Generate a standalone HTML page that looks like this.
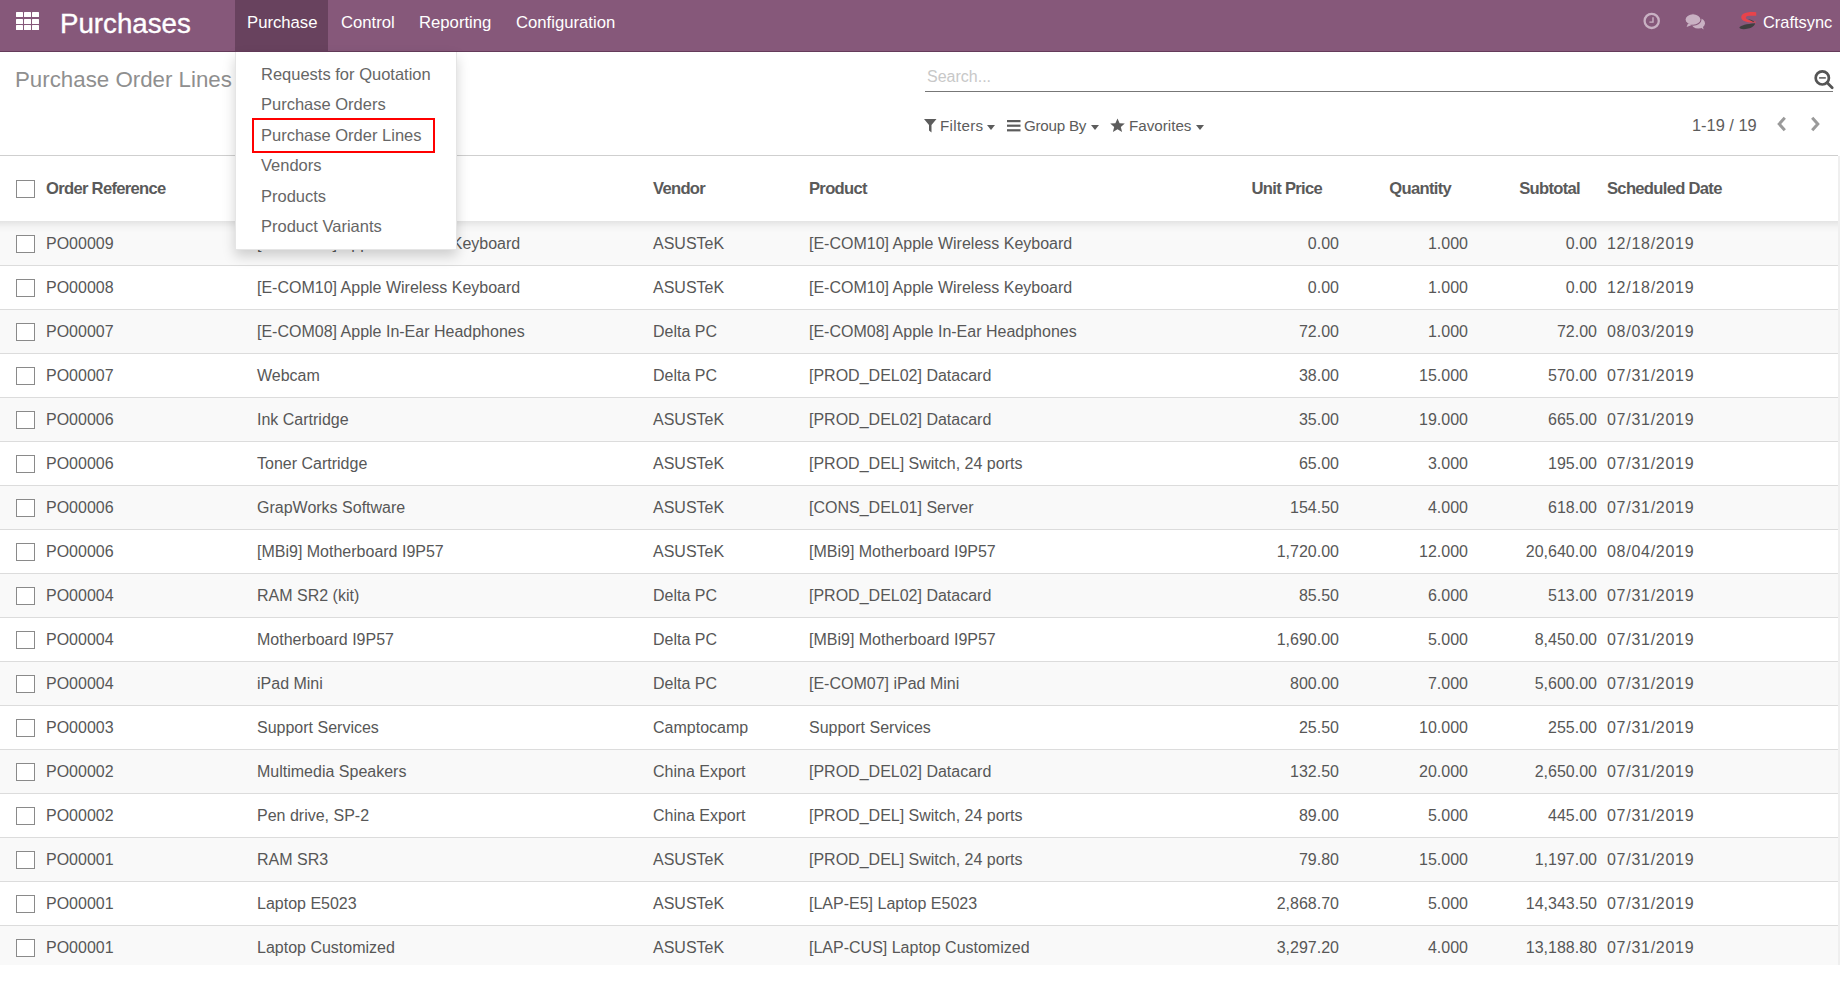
<!DOCTYPE html><html><head><meta charset="utf-8"><style>
*{box-sizing:border-box;margin:0;padding:0}
html,body{width:1840px;height:994px;overflow:hidden;background:#fff;font-family:"Liberation Sans",sans-serif;color:#575757;position:relative}
.a{position:absolute;white-space:nowrap}
.nav{position:absolute;left:0;top:0;width:1840px;height:52px;background:#86587A;border-bottom:1px solid #643b5a}
.navtxt{color:#fff;font-size:16px;line-height:20px}
.cb{position:absolute;left:16px;width:19px;height:18px;border:1px solid #8a8a8a;background:#fff}
.row{position:absolute;left:0;width:1838px;height:44px;border-top:1px solid #dcdcdc}
.odd{background:#f9f9f9}
.t{position:absolute;white-space:nowrap;font-size:16px;line-height:20px}
.r{text-align:right}
.th{position:absolute;white-space:nowrap;font-size:16.6px;line-height:20px;font-weight:bold;color:#5a5a5a;letter-spacing:-0.7px}
.dd{position:absolute;white-space:nowrap;font-size:16.5px;line-height:20px;color:#666;left:261px}
</style></head><body>
<div class="nav"></div>
<div class="a" style="left:235px;top:0;width:93px;height:51px;background:#68425E"></div>
<div class="a" style="left:16px;top:12.0px;width:7px;height:5px;background:#fff;border-radius:0.5px"></div>
<div class="a" style="left:24px;top:12.0px;width:7px;height:5px;background:#fff;border-radius:0.5px"></div>
<div class="a" style="left:32px;top:12.0px;width:7px;height:5px;background:#fff;border-radius:0.5px"></div>
<div class="a" style="left:16px;top:18.5px;width:7px;height:5px;background:#fff;border-radius:0.5px"></div>
<div class="a" style="left:24px;top:18.5px;width:7px;height:5px;background:#fff;border-radius:0.5px"></div>
<div class="a" style="left:32px;top:18.5px;width:7px;height:5px;background:#fff;border-radius:0.5px"></div>
<div class="a" style="left:16px;top:25.0px;width:7px;height:5px;background:#fff;border-radius:0.5px"></div>
<div class="a" style="left:24px;top:25.0px;width:7px;height:5px;background:#fff;border-radius:0.5px"></div>
<div class="a" style="left:32px;top:25.0px;width:7px;height:5px;background:#fff;border-radius:0.5px"></div>
<div class="a navtxt" style="left:60px;top:7px;font-size:27.7px;line-height:34px;-webkit-text-stroke:0.35px #fff">Purchases</div>
<div class="a navtxt" style="left:247px;top:13px;font-size:16.7px">Purchase</div>
<div class="a navtxt" style="left:341px;top:13px;font-size:16.7px">Control</div>
<div class="a navtxt" style="left:419px;top:13px;font-size:16.7px">Reporting</div>
<div class="a navtxt" style="left:516px;top:13px;font-size:16.7px">Configuration</div>
<svg class="a" style="left:1640px;top:9px" width="24" height="24" viewBox="0 0 24 24"><circle cx="11.7" cy="11.9" r="7.1" fill="none" stroke="#c9b1c3" stroke-width="2.3"/><path d="M13 8.2V13.1H9.4" fill="none" stroke="#c9b1c3" stroke-width="1.4"/></svg>
<svg class="a" style="left:1680px;top:8px" width="30" height="26" viewBox="0 0 30 26"><ellipse cx="18.2" cy="15.2" rx="6.8" ry="5.2" fill="#c9b1c3"/><path d="M20 19L23.6 21.4L22.5 17Z" fill="#c9b1c3"/><ellipse cx="13" cy="11.5" rx="8" ry="5.7" fill="#c9b1c3" stroke="#86587A" stroke-width="1.1"/><path d="M8 15.5L6.6 18.9L12.5 16.8Z" fill="#c9b1c3"/></svg>
<svg class="a" style="left:1734px;top:8px" width="30" height="26" viewBox="0 0 30 26"><path d="M22.2 4.3C18 3.6 12.5 4 9.3 5.8C6.6 7.4 6.5 11 9.6 12.8C12.8 14.6 18 14.8 22.1 14.5L21.6 13.5C18 13.2 14.6 12.4 12.6 11C11.2 10 11.6 8.6 13.6 8.1C16.2 7.6 19.2 7.7 22.3 7.8Z" fill="#e8434b"/><path d="M14 11.1C16.5 11.6 18.6 12.4 20.2 13.5L19.2 13.9C17.6 13.1 16 12.3 14 11.1Z" fill="#3f3f3f"/><path d="M5.3 19.6C6.8 17.2 12.5 16 21 15.2C21.2 17 18.4 19.6 14.2 20.6C10.2 21.6 6.2 21.6 5.3 19.6Z" fill="#3f3f3f"/></svg>
<div class="a navtxt" style="left:1763px;top:12px;font-size:16.4px">Craftsync</div>
<div class="a" style="left:15px;top:66px;font-size:22.3px;line-height:28px;color:#8f8f8f">Purchase Order Lines</div>
<div class="a" style="left:925px;top:91px;width:908px;height:1px;background:#777"></div>
<div class="a" style="left:927px;top:67px;font-size:16px;line-height:20px;color:#c8c8c8">Search...</div>
<svg class="a" style="left:1812px;top:68px" width="24" height="24" viewBox="0 0 24 24"><circle cx="10.3" cy="9.9" r="6.6" fill="none" stroke="#555" stroke-width="2.7"/><path d="M7.1 9.9H13.8" stroke="#555" stroke-width="1.5"/><path d="M15.2 14.8L20.2 19.8" stroke="#555" stroke-width="2.8" stroke-linecap="round"/></svg>
<svg class="a" style="left:924px;top:119px" width="13" height="14" viewBox="0 0 13 14"><path d="M0 0H12.5L7.5 6V13.5L5 11.5V6Z" fill="#5c5c5c"/></svg>
<div class="a" style="left:940px;top:116px;font-size:15.2px;letter-spacing:0.3px;line-height:20px;color:#5c5c5c">Filters</div>
<div class="a" style="left:986.5px;top:125px;width:0;height:0;border-left:4.6px solid transparent;border-right:4.6px solid transparent;border-top:5.2px solid #5c5c5c"></div>
<svg class="a" style="left:1007px;top:120px" width="14" height="12" viewBox="0 0 14 12"><rect x="0" y="0" width="13.5" height="2.2" fill="#5c5c5c"/><rect x="0" y="4.6" width="13.5" height="2.2" fill="#5c5c5c"/><rect x="0" y="9.2" width="13.5" height="2.2" fill="#5c5c5c"/></svg>
<div class="a" style="left:1024px;top:116px;font-size:15.2px;letter-spacing:-0.25px;line-height:20px;color:#5c5c5c">Group By</div>
<div class="a" style="left:1090.5px;top:125px;width:0;height:0;border-left:4.6px solid transparent;border-right:4.6px solid transparent;border-top:5.2px solid #5c5c5c"></div>
<svg class="a" style="left:1110px;top:118px" width="16" height="15" viewBox="0 0 16 15"><path d="M7.5 0.5L9.6 5.2L14.8 5.6L10.8 9L12.1 14L7.5 11.3L2.9 14L4.2 9L0.2 5.6L5.4 5.2Z" fill="#5c5c5c"/></svg>
<div class="a" style="left:1129px;top:116px;font-size:15.2px;line-height:20px;color:#5c5c5c">Favorites</div>
<div class="a" style="left:1195.5px;top:125px;width:0;height:0;border-left:4.6px solid transparent;border-right:4.6px solid transparent;border-top:5.2px solid #5c5c5c"></div>
<div class="a" style="left:1692px;top:115px;font-size:16.4px;line-height:20px;color:#5c5c5c">1-19 / 19</div>
<svg class="a" style="left:1775.5px;top:116px" width="12" height="16" viewBox="0 0 12 16"><path d="M8.8 1.8L3.2 8L8.8 14.2" fill="none" stroke="#9a9a9a" stroke-width="3"/></svg>
<svg class="a" style="left:1808.5px;top:116px" width="12" height="16" viewBox="0 0 12 16"><path d="M3.2 1.8L8.8 8L3.2 14.2" fill="none" stroke="#9a9a9a" stroke-width="3"/></svg>
<div class="a" style="left:0;top:155px;width:1838px;height:1px;background:#cfcfcf"></div>
<div class="cb" style="top:180px"></div>
<div class="th" style="left:46px;top:179px">Order Reference</div>
<div class="th" style="left:257px;top:179px">Description</div>
<div class="th" style="left:653px;top:179px">Vendor</div>
<div class="th" style="left:809px;top:179px">Product</div>
<div class="th" style="left:1607px;top:179px">Scheduled Date</div>
<div class="th r" style="right:518px;top:179px">Unit Price</div>
<div class="th r" style="right:389px;top:179px">Quantity</div>
<div class="th r" style="right:260px;top:179px">Subtotal</div>
<div class="row odd" style="top:221px;height:44px;border-top:none"></div>
<div class="cb" style="top:235px"></div>
<div class="t" style="left:46px;top:234px">PO00009</div>
<div class="t" style="left:257px;top:234px">[E-COM10] Apple Wireless Keyboard</div>
<div class="t" style="left:653px;top:234px">ASUSTeK</div>
<div class="t" style="left:809px;top:234px">[E-COM10] Apple Wireless Keyboard</div>
<div class="t" style="left:1607px;top:234px;letter-spacing:0.72px">12/18/2019</div>
<div class="t r" style="right:501px;top:234px">0.00</div>
<div class="t r" style="right:372px;top:234px">1.000</div>
<div class="t r" style="right:243px;top:234px">0.00</div>
<div class="row" style="top:265px;height:44px"></div>
<div class="cb" style="top:279px"></div>
<div class="t" style="left:46px;top:278px">PO00008</div>
<div class="t" style="left:257px;top:278px">[E-COM10] Apple Wireless Keyboard</div>
<div class="t" style="left:653px;top:278px">ASUSTeK</div>
<div class="t" style="left:809px;top:278px">[E-COM10] Apple Wireless Keyboard</div>
<div class="t" style="left:1607px;top:278px;letter-spacing:0.72px">12/18/2019</div>
<div class="t r" style="right:501px;top:278px">0.00</div>
<div class="t r" style="right:372px;top:278px">1.000</div>
<div class="t r" style="right:243px;top:278px">0.00</div>
<div class="row odd" style="top:309px;height:44px"></div>
<div class="cb" style="top:323px"></div>
<div class="t" style="left:46px;top:322px">PO00007</div>
<div class="t" style="left:257px;top:322px">[E-COM08] Apple In-Ear Headphones</div>
<div class="t" style="left:653px;top:322px">Delta PC</div>
<div class="t" style="left:809px;top:322px">[E-COM08] Apple In-Ear Headphones</div>
<div class="t" style="left:1607px;top:322px;letter-spacing:0.72px">08/03/2019</div>
<div class="t r" style="right:501px;top:322px">72.00</div>
<div class="t r" style="right:372px;top:322px">1.000</div>
<div class="t r" style="right:243px;top:322px">72.00</div>
<div class="row" style="top:353px;height:44px"></div>
<div class="cb" style="top:367px"></div>
<div class="t" style="left:46px;top:366px">PO00007</div>
<div class="t" style="left:257px;top:366px">Webcam</div>
<div class="t" style="left:653px;top:366px">Delta PC</div>
<div class="t" style="left:809px;top:366px">[PROD_DEL02] Datacard</div>
<div class="t" style="left:1607px;top:366px;letter-spacing:0.72px">07/31/2019</div>
<div class="t r" style="right:501px;top:366px">38.00</div>
<div class="t r" style="right:372px;top:366px">15.000</div>
<div class="t r" style="right:243px;top:366px">570.00</div>
<div class="row odd" style="top:397px;height:44px"></div>
<div class="cb" style="top:411px"></div>
<div class="t" style="left:46px;top:410px">PO00006</div>
<div class="t" style="left:257px;top:410px">Ink Cartridge</div>
<div class="t" style="left:653px;top:410px">ASUSTeK</div>
<div class="t" style="left:809px;top:410px">[PROD_DEL02] Datacard</div>
<div class="t" style="left:1607px;top:410px;letter-spacing:0.72px">07/31/2019</div>
<div class="t r" style="right:501px;top:410px">35.00</div>
<div class="t r" style="right:372px;top:410px">19.000</div>
<div class="t r" style="right:243px;top:410px">665.00</div>
<div class="row" style="top:441px;height:44px"></div>
<div class="cb" style="top:455px"></div>
<div class="t" style="left:46px;top:454px">PO00006</div>
<div class="t" style="left:257px;top:454px">Toner Cartridge</div>
<div class="t" style="left:653px;top:454px">ASUSTeK</div>
<div class="t" style="left:809px;top:454px">[PROD_DEL] Switch, 24 ports</div>
<div class="t" style="left:1607px;top:454px;letter-spacing:0.72px">07/31/2019</div>
<div class="t r" style="right:501px;top:454px">65.00</div>
<div class="t r" style="right:372px;top:454px">3.000</div>
<div class="t r" style="right:243px;top:454px">195.00</div>
<div class="row odd" style="top:485px;height:44px"></div>
<div class="cb" style="top:499px"></div>
<div class="t" style="left:46px;top:498px">PO00006</div>
<div class="t" style="left:257px;top:498px">GrapWorks Software</div>
<div class="t" style="left:653px;top:498px">ASUSTeK</div>
<div class="t" style="left:809px;top:498px">[CONS_DEL01] Server</div>
<div class="t" style="left:1607px;top:498px;letter-spacing:0.72px">07/31/2019</div>
<div class="t r" style="right:501px;top:498px">154.50</div>
<div class="t r" style="right:372px;top:498px">4.000</div>
<div class="t r" style="right:243px;top:498px">618.00</div>
<div class="row" style="top:529px;height:44px"></div>
<div class="cb" style="top:543px"></div>
<div class="t" style="left:46px;top:542px">PO00006</div>
<div class="t" style="left:257px;top:542px">[MBi9] Motherboard I9P57</div>
<div class="t" style="left:653px;top:542px">ASUSTeK</div>
<div class="t" style="left:809px;top:542px">[MBi9] Motherboard I9P57</div>
<div class="t" style="left:1607px;top:542px;letter-spacing:0.72px">08/04/2019</div>
<div class="t r" style="right:501px;top:542px">1,720.00</div>
<div class="t r" style="right:372px;top:542px">12.000</div>
<div class="t r" style="right:243px;top:542px">20,640.00</div>
<div class="row odd" style="top:573px;height:44px"></div>
<div class="cb" style="top:587px"></div>
<div class="t" style="left:46px;top:586px">PO00004</div>
<div class="t" style="left:257px;top:586px">RAM SR2 (kit)</div>
<div class="t" style="left:653px;top:586px">Delta PC</div>
<div class="t" style="left:809px;top:586px">[PROD_DEL02] Datacard</div>
<div class="t" style="left:1607px;top:586px;letter-spacing:0.72px">07/31/2019</div>
<div class="t r" style="right:501px;top:586px">85.50</div>
<div class="t r" style="right:372px;top:586px">6.000</div>
<div class="t r" style="right:243px;top:586px">513.00</div>
<div class="row" style="top:617px;height:44px"></div>
<div class="cb" style="top:631px"></div>
<div class="t" style="left:46px;top:630px">PO00004</div>
<div class="t" style="left:257px;top:630px">Motherboard I9P57</div>
<div class="t" style="left:653px;top:630px">Delta PC</div>
<div class="t" style="left:809px;top:630px">[MBi9] Motherboard I9P57</div>
<div class="t" style="left:1607px;top:630px;letter-spacing:0.72px">07/31/2019</div>
<div class="t r" style="right:501px;top:630px">1,690.00</div>
<div class="t r" style="right:372px;top:630px">5.000</div>
<div class="t r" style="right:243px;top:630px">8,450.00</div>
<div class="row odd" style="top:661px;height:44px"></div>
<div class="cb" style="top:675px"></div>
<div class="t" style="left:46px;top:674px">PO00004</div>
<div class="t" style="left:257px;top:674px">iPad Mini</div>
<div class="t" style="left:653px;top:674px">Delta PC</div>
<div class="t" style="left:809px;top:674px">[E-COM07] iPad Mini</div>
<div class="t" style="left:1607px;top:674px;letter-spacing:0.72px">07/31/2019</div>
<div class="t r" style="right:501px;top:674px">800.00</div>
<div class="t r" style="right:372px;top:674px">7.000</div>
<div class="t r" style="right:243px;top:674px">5,600.00</div>
<div class="row" style="top:705px;height:44px"></div>
<div class="cb" style="top:719px"></div>
<div class="t" style="left:46px;top:718px">PO00003</div>
<div class="t" style="left:257px;top:718px">Support Services</div>
<div class="t" style="left:653px;top:718px">Camptocamp</div>
<div class="t" style="left:809px;top:718px">Support Services</div>
<div class="t" style="left:1607px;top:718px;letter-spacing:0.72px">07/31/2019</div>
<div class="t r" style="right:501px;top:718px">25.50</div>
<div class="t r" style="right:372px;top:718px">10.000</div>
<div class="t r" style="right:243px;top:718px">255.00</div>
<div class="row odd" style="top:749px;height:44px"></div>
<div class="cb" style="top:763px"></div>
<div class="t" style="left:46px;top:762px">PO00002</div>
<div class="t" style="left:257px;top:762px">Multimedia Speakers</div>
<div class="t" style="left:653px;top:762px">China Export</div>
<div class="t" style="left:809px;top:762px">[PROD_DEL02] Datacard</div>
<div class="t" style="left:1607px;top:762px;letter-spacing:0.72px">07/31/2019</div>
<div class="t r" style="right:501px;top:762px">132.50</div>
<div class="t r" style="right:372px;top:762px">20.000</div>
<div class="t r" style="right:243px;top:762px">2,650.00</div>
<div class="row" style="top:793px;height:44px"></div>
<div class="cb" style="top:807px"></div>
<div class="t" style="left:46px;top:806px">PO00002</div>
<div class="t" style="left:257px;top:806px">Pen drive, SP-2</div>
<div class="t" style="left:653px;top:806px">China Export</div>
<div class="t" style="left:809px;top:806px">[PROD_DEL] Switch, 24 ports</div>
<div class="t" style="left:1607px;top:806px;letter-spacing:0.72px">07/31/2019</div>
<div class="t r" style="right:501px;top:806px">89.00</div>
<div class="t r" style="right:372px;top:806px">5.000</div>
<div class="t r" style="right:243px;top:806px">445.00</div>
<div class="row odd" style="top:837px;height:44px"></div>
<div class="cb" style="top:851px"></div>
<div class="t" style="left:46px;top:850px">PO00001</div>
<div class="t" style="left:257px;top:850px">RAM SR3</div>
<div class="t" style="left:653px;top:850px">ASUSTeK</div>
<div class="t" style="left:809px;top:850px">[PROD_DEL] Switch, 24 ports</div>
<div class="t" style="left:1607px;top:850px;letter-spacing:0.72px">07/31/2019</div>
<div class="t r" style="right:501px;top:850px">79.80</div>
<div class="t r" style="right:372px;top:850px">15.000</div>
<div class="t r" style="right:243px;top:850px">1,197.00</div>
<div class="row" style="top:881px;height:44px"></div>
<div class="cb" style="top:895px"></div>
<div class="t" style="left:46px;top:894px">PO00001</div>
<div class="t" style="left:257px;top:894px">Laptop E5023</div>
<div class="t" style="left:653px;top:894px">ASUSTeK</div>
<div class="t" style="left:809px;top:894px">[LAP-E5] Laptop E5023</div>
<div class="t" style="left:1607px;top:894px;letter-spacing:0.72px">07/31/2019</div>
<div class="t r" style="right:501px;top:894px">2,868.70</div>
<div class="t r" style="right:372px;top:894px">5.000</div>
<div class="t r" style="right:243px;top:894px">14,343.50</div>
<div class="row odd" style="top:925px;height:44px"></div>
<div class="cb" style="top:939px"></div>
<div class="t" style="left:46px;top:938px">PO00001</div>
<div class="t" style="left:257px;top:938px">Laptop Customized</div>
<div class="t" style="left:653px;top:938px">ASUSTeK</div>
<div class="t" style="left:809px;top:938px">[LAP-CUS] Laptop Customized</div>
<div class="t" style="left:1607px;top:938px;letter-spacing:0.72px">07/31/2019</div>
<div class="t r" style="right:501px;top:938px">3,297.20</div>
<div class="t r" style="right:372px;top:938px">4.000</div>
<div class="t r" style="right:243px;top:938px">13,188.80</div>
<div class="a" style="left:0;top:221px;width:1838px;height:12px;background:linear-gradient(rgba(0,0,0,0.085),rgba(0,0,0,0.025) 50%,rgba(0,0,0,0))"></div>
<div class="a" style="left:0;top:965px;width:1840px;height:29px;background:#fff"></div>
<div class="a" style="left:1838px;top:156px;width:2px;height:809px;background:#efefef"></div>
<div class="a" style="left:235px;top:52px;width:222px;height:198px;background:#fff;border:1px solid rgba(0,0,0,0.1);border-top:none;box-shadow:0 6px 12px rgba(0,0,0,0.175)"></div>
<div class="dd" style="top:64px">Requests for Quotation</div>
<div class="dd" style="top:94px">Purchase Orders</div>
<div class="dd" style="top:125px">Purchase Order Lines</div>
<div class="dd" style="top:155px">Vendors</div>
<div class="dd" style="top:186px">Products</div>
<div class="dd" style="top:216px">Product Variants</div>
<div class="a" style="left:252px;top:118px;width:183px;height:35px;border:2px solid #ff0000"></div>
</body></html>
